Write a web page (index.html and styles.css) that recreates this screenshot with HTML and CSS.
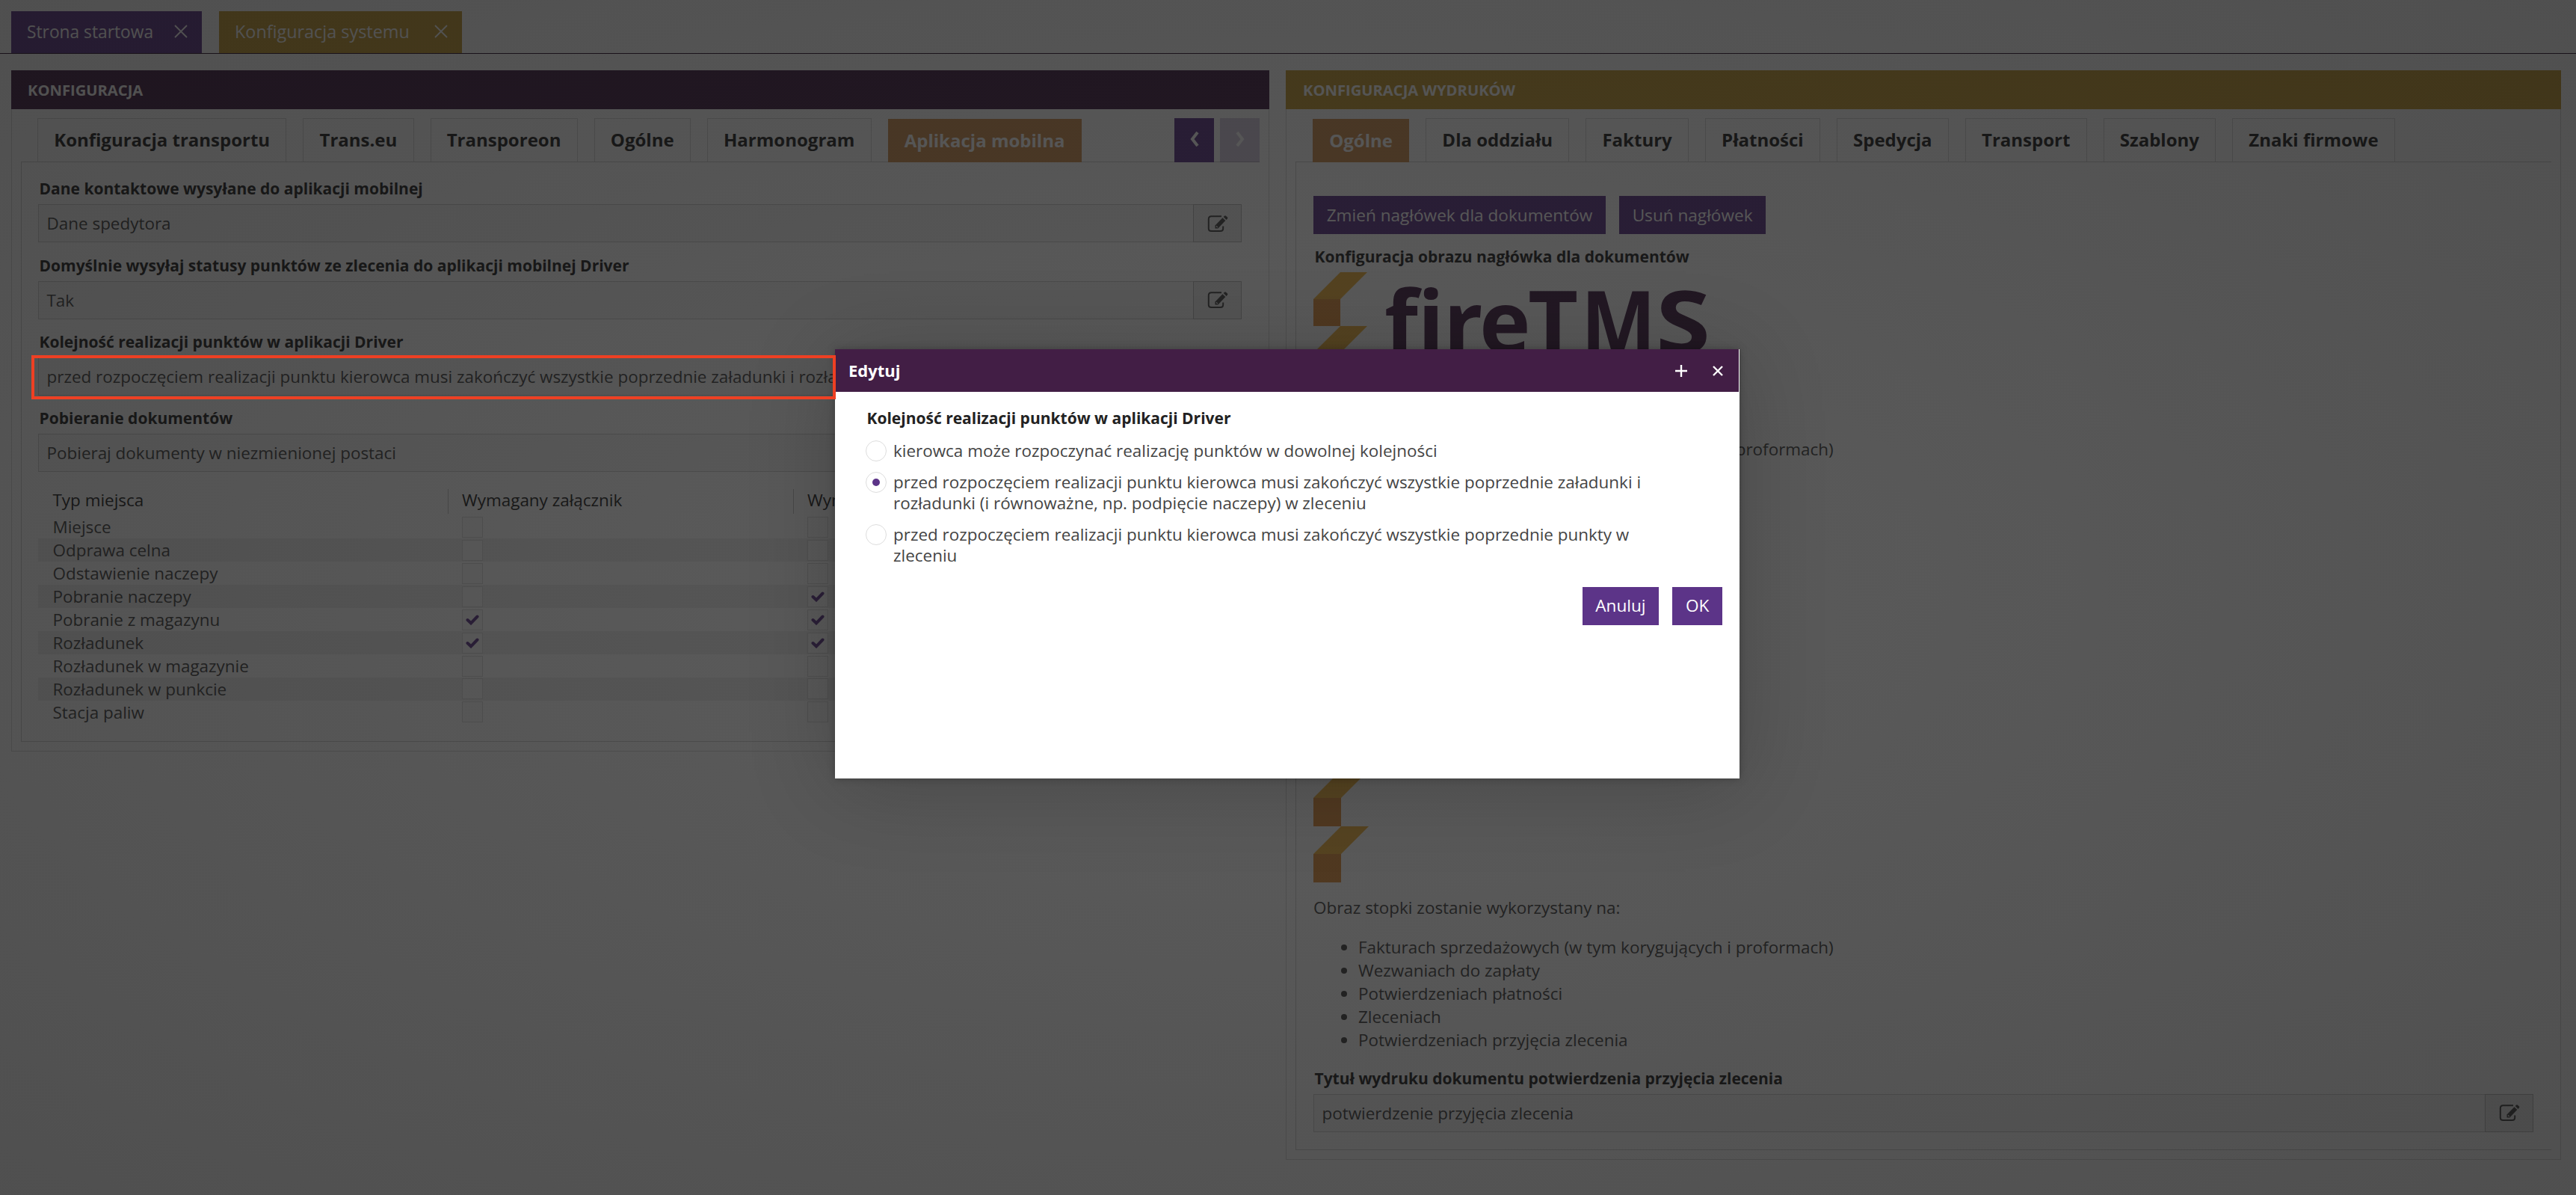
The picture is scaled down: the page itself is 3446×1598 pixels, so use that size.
FILE: index.html
```
<!DOCTYPE html>
<html lang="pl">

<head>
    <meta charset="UTF-8">
    <meta name="viewport" content="width=device-width, initial-scale=1.0">
    <title>Konfiguracja systemu</title>
    <link rel="stylesheet" href="styles.css">
</head>

<body>
    <!-- shared icons -->
    <svg class="sprite">
        <symbol id="close" viewBox="0 0 18 18">
            <path d="M1 1L17 17M17 1L1 17" fill="none" stroke="currentColor" stroke-width="1.8" />
        </symbol>
        <symbol id="edit" viewBox="0 0 28 24">
            <path d="M19 2.2H5.5Q1.8 2.2 1.8 6V18.5Q1.8 22 5.5 22H17.5Q21.2 22 21.2 18.5V15.5" fill="none" stroke="currentColor" stroke-width="2" />
            <path d="M10.5 14.5L20.5 4.2L24.3 8L14.3 18.6H10.5Z" fill="currentColor" />
            <path d="M21.7 3L23 1.7Q24 .9 25 1.8L26.9 3.6Q27.7 4.6 26.9 5.5L25.5 6.9Z" fill="currentColor" />
            <path d="M12 15.3L13.8 17.1" stroke="#eaeaea" stroke-width="1.3" />
        </symbol>
        <symbol id="check" viewBox="0 0 18 14">
            <path d="M2.5 7L7 11.3L15.5 2.5" fill="none" stroke="currentColor" stroke-width="4" stroke-linecap="round" />
        </symbol>
    </svg>

    <nav class="topTabs">
        <div class="topTab">Strona startowa <svg><use href="#close" /></svg></div>
        <div class="topTab gold">Konfiguracja systemu <svg><use href="#close" /></svg></div>
    </nav>

    <main class="panels">
        <section class="panel panelLeft">
            <h2>KONFIGURACJA</h2>
            <div class="tabs">
                <div class="tab">Konfiguracja transportu</div>
                <div class="tab">Trans.eu</div>
                <div class="tab">Transporeon</div>
                <div class="tab">Ogólne</div>
                <div class="tab">Harmonogram</div>
                <div class="tab active">Aplikacja mobilna</div>
                <div class="arrows">
                    <button><svg viewBox="0 0 14 22"><path d="M11 2L4 11L11 20" /></svg></button>
                    <button class="disabled"><svg viewBox="0 0 14 22"><path d="M3 2L10 11L3 20" /></svg></button>
                </div>
            </div>
            <div class="content">
                <div class="field">
                    <label>Dane kontaktowe wysyłane do aplikacji mobilnej</label>
                    <div class="value"><span>Dane spedytora</span><i><svg><use href="#edit" /></svg></i></div>
                </div>
                <div class="field">
                    <label>Domyślnie wysyłaj statusy punktów ze zlecenia do aplikacji mobilnej Driver</label>
                    <div class="value"><span>Tak</span><i><svg><use href="#edit" /></svg></i></div>
                </div>
                <div class="field">
                    <label>Kolejność realizacji punktów w aplikacji Driver</label>
                    <div class="value"><span>przed rozpoczęciem realizacji punktu kierowca musi zakończyć wszystkie poprzednie załadunki i rozładunki</span><i><svg><use href="#edit" /></svg></i></div>
                </div>
                <div class="field">
                    <label>Pobieranie dokumentów</label>
                    <div class="value"><span>Pobieraj dokumenty w niezmienionej postaci</span><i><svg><use href="#edit" /></svg></i></div>
                </div>

                <div class="table">
                    <div class="row head">
                        <span>Typ miejsca</span><span>Wymagany załącznik</span><span>Wymagany</span>
                    </div>
                    <div class="row"><span>Miejsce</span><b></b><b></b></div>
                    <div class="row"><span>Odprawa celna</span><b></b><b></b></div>
                    <div class="row"><span>Odstawienie naczepy</span><b></b><b></b></div>
                    <div class="row"><span>Pobranie naczepy</span><b></b><b><svg><use href="#check" /></svg></b></div>
                    <div class="row"><span>Pobranie z magazynu</span><b><svg><use href="#check" /></svg></b><b><svg><use href="#check" /></svg></b></div>
                    <div class="row"><span>Rozładunek</span><b><svg><use href="#check" /></svg></b><b><svg><use href="#check" /></svg></b></div>
                    <div class="row"><span>Rozładunek w magazynie</span><b></b><b></b></div>
                    <div class="row"><span>Rozładunek w punkcie</span><b></b><b></b></div>
                    <div class="row"><span>Stacja paliw</span><b></b><b></b></div>
                </div>
            </div>
        </section>

        <section class="panel panelRight">
            <h2 class="gold">KONFIGURACJA WYDRUKÓW</h2>
            <div class="tabs">
                <div class="tab active">Ogólne</div>
                <div class="tab">Dla oddziału</div>
                <div class="tab">Faktury</div>
                <div class="tab">Płatności</div>
                <div class="tab">Spedycja</div>
                <div class="tab">Transport</div>
                <div class="tab">Szablony</div>
                <div class="tab">Znaki firmowe</div>
            </div>
            <div class="content">
                <div class="buttons">
                    <button class="button">Zmień nagłówek dla dokumentów</button>
                    <button class="button">Usuń nagłówek</button>
                </div>
                <label class="imageLabel">Konfiguracja obrazu nagłówka dla dokumentów</label>
                <svg class="logo" viewBox="0 0 540 145">
                    <path d="M36 0H72L36 36H0ZM36 72H72L36 108H0Z" fill="#f0b23c" />
                    <path d="M0 36H36V72H0ZM0 108H36V144H0Z" fill="#e08f3c" />
                    <text x="95 139.5 174 222" y="109">fire</text>
                    <text x="287" y="109">T</text>
                    <text x="358" y="109" textLength="100" lengthAdjust="spacingAndGlyphs">M</text>
                    <text x="458" y="109" textLength="73" lengthAdjust="spacingAndGlyphs">S</text>
                </svg>
                <p class="usage">Obraz nagłówka zostanie wykorzystany na:</p>
                <ul class="usageList">
                    <li>Fakturach sprzedażowych (w tym korygujących i proformach)</li>
                </ul>
                <svg class="logo logoFooter" viewBox="0 0 540 150">
                    <path d="M37 0H74L37 37H0ZM37 75H74L37 112H0Z" fill="#f0b23c" />
                    <path d="M0 37H37V75H0ZM0 112H37V150H0Z" fill="#e08f3c" />
                </svg>
                <p class="usage usageFooter">Obraz stopki zostanie wykorzystany na:</p>
                <ul class="usageList">
                    <li>Fakturach sprzedażowych (w tym korygujących i proformach)</li>
                    <li>Wezwaniach do zapłaty</li>
                    <li>Potwierdzeniach płatności</li>
                    <li>Zleceniach</li>
                    <li>Potwierdzeniach przyjęcia zlecenia</li>
                </ul>
                <div class="field">
                    <label>Tytuł wydruku dokumentu potwierdzenia przyjęcia zlecenia</label>
                    <div class="value"><span>potwierdzenie przyjęcia zlecenia</span><i><svg><use href="#edit" /></svg></i></div>
                </div>
            </div>
        </section>
    </main>

    <div class="overlay"></div>

    <div class="modal">
        <div class="modalHeader">
            <strong>Edytuj</strong>
            <svg viewBox="0 0 16 16"><path d="M8 0V16M0 8H16" /></svg>
            <svg viewBox="0 0 16 16"><path d="M2 2L14 14M14 2L2 14" /></svg>
        </div>
        <div class="modalBody">
            <label>Kolejność realizacji punktów w aplikacji Driver</label>
            <div class="option"><i></i>kierowca może rozpoczynać realizację punktów w dowolnej kolejności</div>
            <div class="option checked"><i></i>przed rozpoczęciem realizacji punktu kierowca musi zakończyć wszystkie poprzednie załadunki i<br>rozładunki (i równoważne, np. podpięcie naczepy) w zleceniu</div>
            <div class="option"><i></i>przed rozpoczęciem realizacji punktu kierowca musi zakończyć wszystkie poprzednie punkty w<br>zleceniu</div>
        </div>
        <div class="modalButtons">
            <button class="button">Anuluj</button>
            <button class="button">OK</button>
        </div>
    </div>

    <div class="highlight"></div>
</body>

</html>
```
FILE: styles.css
```
* {
    box-sizing: border-box;
}

body {
    font-family: "Open Sans", "Noto Sans", sans-serif;
    font-size: 22.45px;
    background-color: #fff;
    color: #444;
    margin: 0px;
    width: 3446px;
    height: 1598px;
    overflow: hidden;
}

.sprite {
    display: none;
}

.topTabs {
    display: flex;
    gap: 23px;
    height: 72px;
    padding: 15px 15px 0;
    border-bottom: 1px solid #2a0f2c;
}

.topTab {
    display: flex;
    align-items: center;
    justify-content: space-between;
    width: 255px;
    padding: 0 19px 2px 21px;
    background-color: #5c3488;
    color: #fff;
    font-size: 22.75px;
}

.topTab.gold {
    width: 325px;
    font-size: 23.4px;
    font-weight: 500;
}

.topTab svg {
    width: 18px;
    height: 18px;
}

.gold {
    background-color: #c49a30 !important;
}

.panels {
    display: flex;
    align-items: flex-start;
    gap: 22px;
    padding: 22px 0 0 15px;
}

.panel {
    border: 1px solid #d8d8d8;
    border-top: none;
}

.panelLeft {
    width: 1683px;
    height: 911px;
}

.panelRight {
    width: 1706px;
    height: 1457px;
}

h2 {
    margin: 0 -1px;
    padding-left: 22px;
    height: 52px;
    line-height: 52px;
    font-size: 20.2px;
    font-weight: 700;
    background-color: #421e45;
    color: #fff;
}

.panelRight h2 {
    padding-left: 23px;
}

.tabs {
    display: flex;
    gap: 22px;
    margin: 12px 12px 0;
    padding-left: 22px;
    height: 58px;
}

.panelRight .tabs {
    padding-left: 23px;
}

.tab {
    height: 58px;
    padding: 0 21.2px;
    line-height: 56px;
    font-size: 24px;
    font-weight: 700;
    color: #222;
    border: 1px solid #d8d8d8;
    border-bottom: none;
    white-space: nowrap;
}

.tab.active {
    height: 58px;
    margin-top: 1px;
    background: #d09050;
    border-color: #d09050;
    color: #fff;
    z-index: 1;
}

.arrows {
    display: flex;
    gap: 8px;
    margin-left: auto;
}

.arrows button {
    width: 53px;
    height: 59px;
    border: none;
    background: #5c3488;
}

.arrows .disabled {
    opacity: .25;
}

.arrows svg {
    width: 14px;
    height: 22px;
    fill: none;
    stroke: #fff;
    stroke-width: 4;
}

.content {
    margin: 0 12px;
    border: 1px solid #d0d0d0;
    border-right: none;
    padding: 5px 24px 0 22px;
}

.panelLeft .content {
    height: 776px;
}

.panelRight .content {
    height: 1322px;
    padding: 45px 24px 0 23px;
}

label {
    display: block;
    font-size: 21px;
    font-weight: 700;
    color: #222;
    padding-left: 1.5px;
}

.field {
    padding-top: 9.35px;
}

.field label {
    line-height: 42px;
}

.value {
    display: flex;
    height: 51px;
    background: #f8f8f8;
    border: 1px solid #d0d0d0;
}

.value span {
    flex: 1;
    padding-left: 10.5px;
    line-height: 50px;
    white-space: nowrap;
    overflow: hidden;
}

.value i {
    display: flex;
    align-items: center;
    justify-content: center;
    width: 65px;
    margin: -1px;
    background: #ececec;
    border: 1px solid #b8b8b8;
}

.value svg {
    width: 28px;
    height: 24px;
}

.table {
    margin-top: 16px;
}

.row {
    display: grid;
    grid-template-columns: 567px 462px 1fr;
    height: 30.95px;
    line-height: 31px;
}

.row:nth-child(odd):not(.head) {
    background: #f0f0f0;
}

.row > span:first-child {
    padding-left: 19.5px;
}

.row b {
    display: flex;
    align-items: center;
    justify-content: center;
    width: 28px;
    height: 28px;
    margin-top: 1.5px;
    border: 1px solid #dcdcdc;
    background: #fcfcfc;
    color: #5c3488;
}

.row svg {
    width: 18px;
    height: 14px;
}

.row.head {
    height: 42px;
    padding-top: 7px;
    line-height: 30px;
    color: #222;
}

.row.head span {
    height: 33px;
    padding-left: 18px;
    margin-left: -19px;
    border-left: 1px solid #c4c4c4;
}

.row.head span:first-child {
    margin-left: 0;
    padding-left: 19.5px;
    border: none;
}

.buttons {
    display: flex;
    gap: 18px;
}

.button {
    height: 51px;
    padding: 0 17.7px 1px;
    border: none;
    background: #5c3488;
    color: #fff;
    font-family: inherit;
    font-size: 22.6px;
}

.imageLabel {
    line-height: 43px;
    margin-top: 9px;
    margin-bottom: -1px;
}

.logo {
    display: block;
    width: 540px;
    height: 145px;
}

.logo text {
    font-size: 116px;
    font-weight: 700;
    fill: #421e45;
}

.usage {
    margin: 23px 0;
    line-height: 31px;
}

.usageFooter {
    margin-top: 18px;
}

.usageList {
    margin: 0 0 14px;
    padding-left: 60px;
    line-height: 30.95px;
}

.logoFooter {
    margin-top: 413px;
    height: 150px;
}

.panelRight .field {
    padding-top: 0;
}

.overlay {
    position: absolute;
    z-index: 5;
    top: 0;
    left: 0;
    width: 3446px;
    height: 1598px;
    background: radial-gradient(ellipse at center, rgba(22, 22, 22, .71) 0%, rgba(22, 22, 22, .71) 25%, rgba(18, 18, 18, .74) 100%);
}

.modal {
    position: absolute;
    z-index: 6;
    left: 1117px;
    top: 467px;
    width: 1210px;
    height: 574px;
    background: #fff;
    box-shadow: 0 0 10px rgba(0, 0, 0, .25), 0 10px 110px rgba(0, 0, 0, .2);
}

.modalHeader {
    display: flex;
    align-items: center;
    height: 57px;
    margin-right: 1px;
    padding: 0 20px 0 18px;
    background: #421e45;
    color: #fff;
}

.modalHeader strong {
    flex: 1;
    font-size: 22px;
    line-height: 30px;
    padding-bottom: 1px;
}

.modalHeader svg {
    width: 16px;
    height: 16px;
    margin-left: 33px;
    fill: none;
    stroke: #fff;
    stroke-width: 2.4;
}

.modalBody {
    padding: 15px 41px 0;
}

.modalBody label {
    line-height: 40px;
    margin-bottom: 10px;
}

.option {
    position: relative;
    padding-left: 37px;
    margin-bottom: 13px;
    line-height: 28.6px;
}

.option i {
    position: absolute;
    left: 0;
    top: 0;
    width: 28px;
    height: 28px;
    border: 1px solid #ddd;
    border-radius: 50%;
}

.option.checked i::after {
    content: "";
    position: absolute;
    left: 8px;
    top: 8px;
    width: 10px;
    height: 10px;
    border-radius: 50%;
    background: #5c3488;
}

.modalButtons {
    display: flex;
    justify-content: flex-end;
    gap: 18px;
    margin-top: 27px;
    padding-right: 23px;
}

.modalButtons .button {
    font-weight: 500;
}

.highlight {
    position: absolute;
    z-index: 7;
    left: 42px;
    top: 475px;
    width: 1076px;
    height: 59px;
    border: 4px solid #ee4023;
}
```
